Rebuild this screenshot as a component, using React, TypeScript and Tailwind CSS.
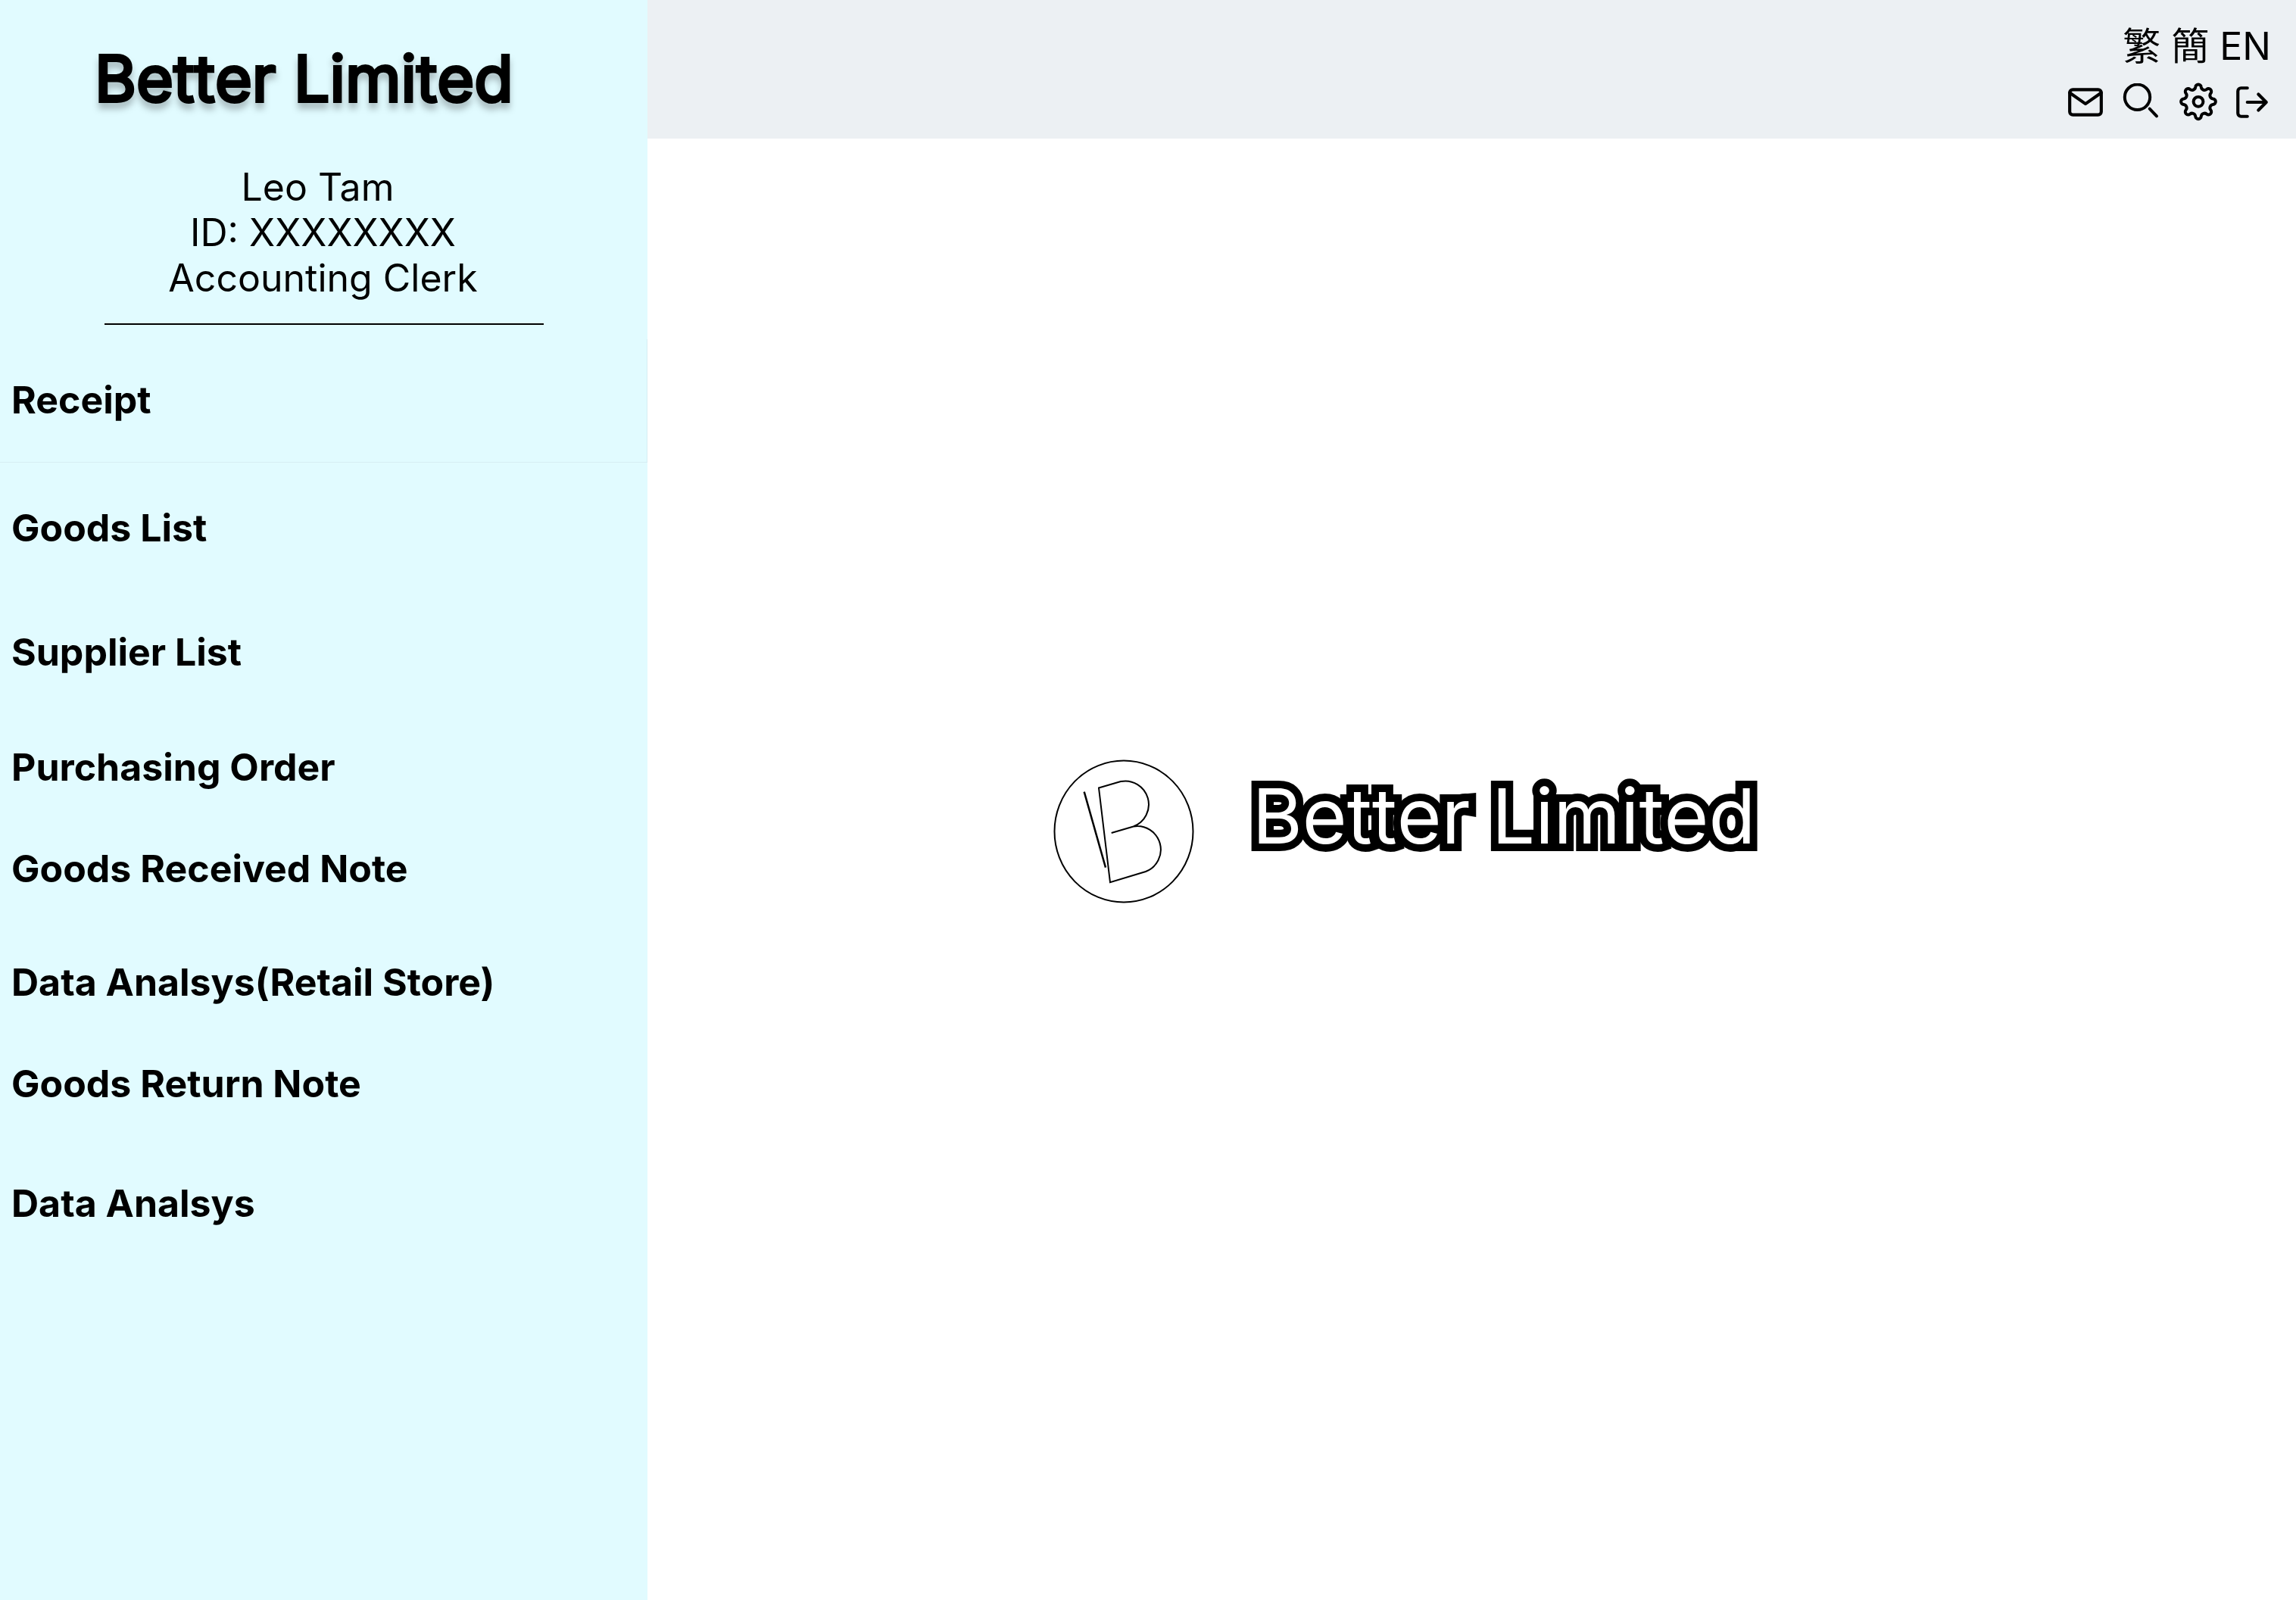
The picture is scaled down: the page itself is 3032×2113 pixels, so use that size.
import React from "react";

type NavItem = { label: string; className: string };

const NAV: NavItem[] = [
  { label: "Goods List", className: "mt-[56px]" },
  { label: "Supplier List", className: "mt-[104px]" },
  { label: "Purchasing Order", className: "mt-[92px]" },
  { label: "Goods Received Note", className: "mt-[74px]" },
  { label: "Data Analsys(Retail Store)", className: "mt-[90px]" },
  { label: "Goods Return Note", className: "mt-[74px]" },
  { label: "Data Analsys", className: "mt-[98px]" },
];

const stroke = {
  fill: "none",
  stroke: "currentColor",
  strokeWidth: 2,
  strokeLinecap: "round" as const,
  strokeLinejoin: "round" as const,
};

function MailIcon() {
  return (
    <svg className="size-[50px]" viewBox="0 0 24 24" {...stroke} aria-hidden="true">
      <rect x="2" y="4" width="20" height="16" rx="2" />
      <path d="M22 6l-10 7L2 6" />
    </svg>
  );
}

function SearchIcon() {
  return (
    <svg className="size-[50px]" viewBox="0 0 50 50" {...stroke} strokeWidth={4} aria-hidden="true">
      <circle cx="19.5" cy="18.3" r="16.7" />
      <path d="M35.7 33.7L45 43.3" />
    </svg>
  );
}

/* Eight round lobes joined by tangent concave arcs around the hub. */
const GEAR_PATH = (() => {
  const cx = 27;
  const cy = 24.3;
  const lobeR = 3.8;
  const lobeAt = 18.9;
  const dipR = 4.46;
  const dipAt = 21.5;
  const at = (r: number, k: number) => {
    const a = (k * Math.PI) / 8;
    return [cx + r * Math.sin(a), cy - r * Math.cos(a)];
  };
  const touch = (lobe: number, dip: number) => {
    const [lx, ly] = at(lobeAt, lobe);
    const [dx, dy] = at(dipAt, dip);
    const t = lobeR / (lobeR + dipR);
    return `${(lx + (dx - lx) * t).toFixed(2)} ${(ly + (dy - ly) * t).toFixed(2)}`;
  };
  let d = `M${touch(0, -1)}`;
  for (let k = 0; k < 16; k += 2) {
    d += `A${lobeR} ${lobeR} 0 0 1 ${touch(k, k + 1)}`;
    d += `A${dipR} ${dipR} 0 0 0 ${touch(k + 2, k + 1)}`;
  }
  return d + "Z";
})();

function GearIcon() {
  return (
    <svg className="size-[50px] overflow-visible" viewBox="0 0 50 50" {...stroke} strokeWidth={4} aria-hidden="true">
      <path d={GEAR_PATH} />
      <circle cx="27" cy="24.3" r="6.4" />
    </svg>
  );
}

function LogOutIcon() {
  return (
    <svg className="size-[50px]" viewBox="0 0 24 24" {...stroke} aria-hidden="true">
      <path d="M9 21H5a2 2 0 0 1-2-2V5a2 2 0 0 1 2-2h4M16 17l5-5-5-5M21 12H9" />
    </svg>
  );
}

function BrandMark() {
  return (
    <svg className="h-[190px] w-[186px] shrink-0" viewBox="0 0 186 190" fill="none" stroke="black" strokeWidth="2" aria-hidden="true">
      <ellipse cx="93" cy="95" rx="91.5" ry="93.5" />
      <path d="M40.7 42.7L69 142.7" strokeWidth="2.5" />
      <path d="M76.7 97L105.7 88.5A31 31 0 0 1 122 148L75 162.3L60 37.5L89 29A31 31 0 0 1 105.7 88.5" />
    </svg>
  );
}

export default function App() {
  return (
    <div className="flex min-h-screen bg-white font-[Inter,'Noto_Sans_CJK_TC',sans-serif] text-[50px] leading-[60px] text-black">
      <aside className="w-[855px] shrink-0 bg-[#e1fbff]">
        <h1 className="pt-[52px] pl-[125px] text-[84px] leading-[104px] [font-kerning:none] [-webkit-text-stroke:4px_black] [filter:drop-shadow(0_8px_4px_rgba(0,0,0,0.25))]">
          Better Limited
        </h1>
        <div className="mx-auto mt-[61px] w-[580px] border-b-2 border-black pr-[2px] pb-[30px] text-center whitespace-pre">
          <p>{"Leo Tam "}</p>
          <p>ID: XXXXXXXX</p>
          <p>Accounting Clerk</p>
        </div>
        <nav className="mt-[19px] font-bold">
          <a href="#receipt" className="flex h-[163px] items-center border-r border-b border-[#d6eef3] pb-[2px] pl-[15px]">
            Receipt
          </a>
          {NAV.map((item) => (
            <a key={item.label} href="#section" className={`block pl-[15px] ${item.className}`}>
              {item.label}
            </a>
          ))}
        </nav>
      </aside>
      <div className="flex min-w-0 grow flex-col">
        <header className="flex h-[183px] flex-col items-end bg-[#ecf0f3] pt-[31px] pr-[33px]">
          <div className="flex gap-[14px]">
            <button type="button">繁</button>
            <button type="button">簡</button>
            <button type="button">EN</button>
          </div>
          <div className="mt-[19px] flex gap-[23px]">
            <button type="button" aria-label="Mail" className="pr-[1px]"><MailIcon /></button>
            <button type="button" aria-label="Search"><SearchIcon /></button>
            <button type="button" aria-label="Settings"><GearIcon /></button>
            <button type="button" aria-label="Log out"><LogOutIcon /></button>
          </div>
        </header>
        <main className="flex grow justify-center pt-[820px] pr-[178px]">
          <div className="flex items-start gap-[77px]">
            <BrandMark />
            <p className="pt-[13px] text-[101px] leading-[122px] whitespace-nowrap text-white [font-kerning:none] [paint-order:stroke_fill] [-webkit-text-stroke:20px_black]">
              Better Limited
            </p>
          </div>
        </main>
      </div>
    </div>
  );
}
